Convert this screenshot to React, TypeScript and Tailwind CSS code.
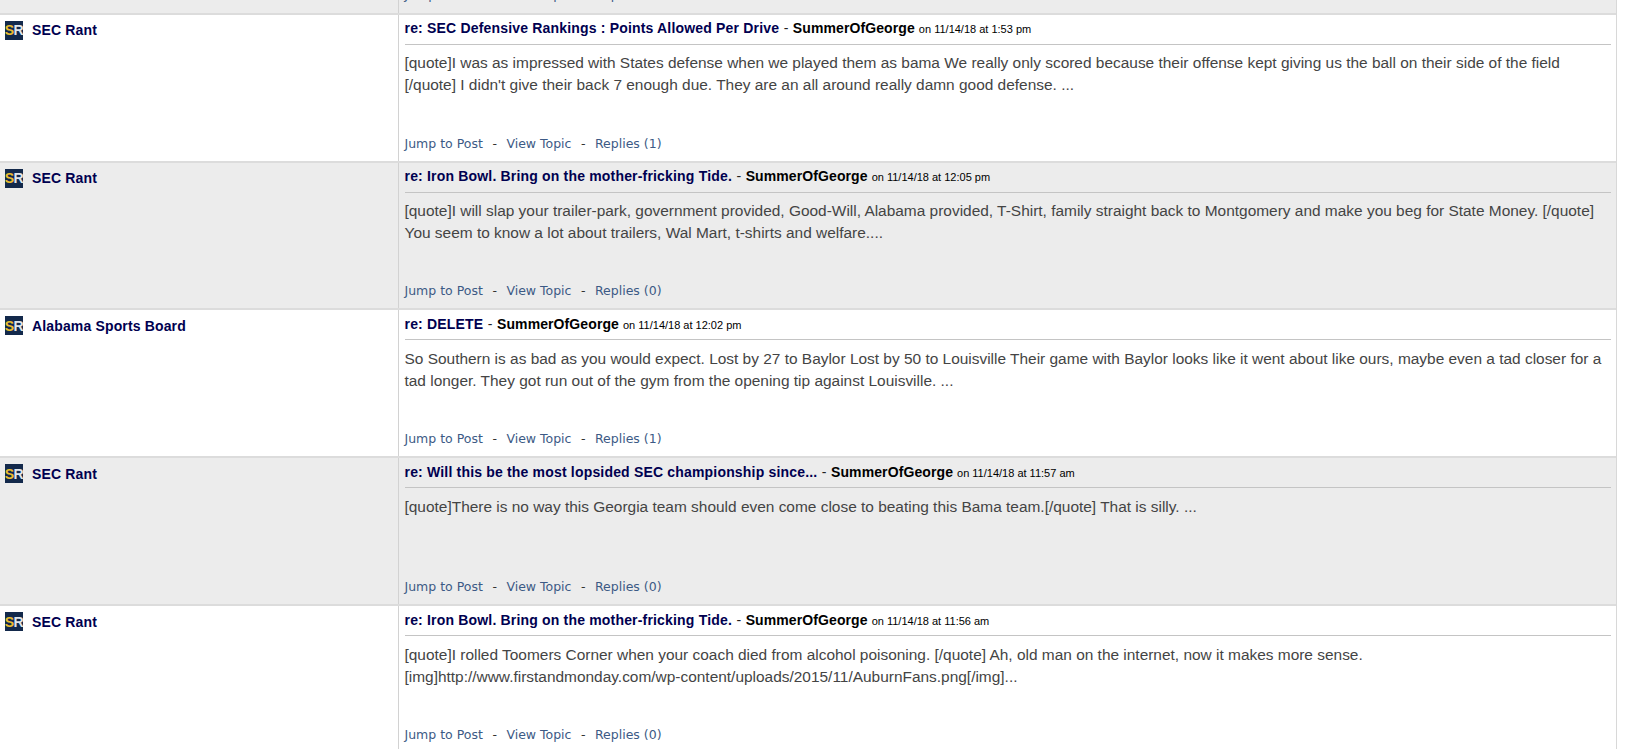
const arial = "font-['Liberation_Sans',Arial,sans-serif]";

type Post = {
  board: string;
  title: string;
  date: string;
  body: string[];
  replies: number;
};

const posts: Post[] = [
  {
    board: "SEC Rant",
    title: "re: SEC Defensive Rankings : Points Allowed Per Drive",
    date: "on 11/14/18 at 1:53 pm",
    body: [
      "[quote]I was as impressed with States defense when we played them as bama We really only scored because their offense kept giving us the ball on their side of the field",
      "[/quote] I didn't give their back 7 enough due. They are an all around really damn good defense. ...",
    ],
    replies: 1,
  },
  {
    board: "SEC Rant",
    title: "re: Iron Bowl. Bring on the mother-fricking Tide.",
    date: "on 11/14/18 at 12:05 pm",
    body: [
      "[quote]I will slap your trailer-park, government provided, Good-Will, Alabama provided, T-Shirt, family straight back to Montgomery and make you beg for State Money. [/quote]",
      "You seem to know a lot about trailers, Wal Mart, t-shirts and welfare....",
    ],
    replies: 0,
  },
  {
    board: "Alabama Sports Board",
    title: "re: DELETE",
    date: "on 11/14/18 at 12:02 pm",
    body: [
      "So Southern is as bad as you would expect. Lost by 27 to Baylor Lost by 50 to Louisville Their game with Baylor looks like it went about like ours, maybe even a tad closer for a",
      "tad longer. They got run out of the gym from the opening tip against Louisville. ...",
    ],
    replies: 1,
  },
  {
    board: "SEC Rant",
    title: "re: Will this be the most lopsided SEC championship since...",
    date: "on 11/14/18 at 11:57 am",
    body: ["[quote]There is no way this Georgia team should even come close to beating this Bama team.[/quote] That is silly. ..."],
    replies: 0,
  },
  {
    board: "SEC Rant",
    title: "re: Iron Bowl. Bring on the mother-fricking Tide.",
    date: "on 11/14/18 at 11:56 am",
    body: [
      "[quote]I rolled Toomers Corner when your coach died from alcohol poisoning. [/quote] Ah, old man on the internet, now it makes more sense.",
      "[img]http://www.firstandmonday.com/wp-content/uploads/2015/11/AuburnFans.png[/img]...",
    ],
    replies: 0,
  },
];

function Logo() {
  return (
    <span className={`flex h-[19px] w-[18px] shrink-0 items-center justify-center overflow-hidden bg-[#13294b] text-[14px] leading-none font-bold tracking-[-0.5px] ${arial}`}>
      <span className="text-[#e9bd2f]">S</span>
      <span className="text-[#dfe5ec]">R</span>
    </span>
  );
}

function Links({ replies }: { replies: number }) {
  return (
    <div className="flex h-[16px] items-center font-['DejaVu_Sans',Verdana,sans-serif] text-[12.5px] leading-none text-[#3c5a85]">
      <span>Jump to Post</span>
      <span className="mx-[9.5px] text-[#333]">-</span>
      <span>View Topic</span>
      <span className="mx-[9.5px] text-[#333]">-</span>
      <span>Replies ({replies})</span>
    </div>
  );
}

function Row({ post, shaded }: { post: Post; shaded: boolean }) {
  return (
    <div className={`flex h-[147.85px] border-b-2 border-[#dcdcdc] ${shaded ? "bg-[#ececec]" : "bg-white"}`}>
      <div className="flex w-[398px] shrink-0 gap-[9px] pt-[6px] pl-[5px]">
        <Logo />
        <a className={`pt-[1.5px] text-[14px] leading-[16px] font-bold tracking-[0.15px] text-[#000050] ${arial}`}>{post.board}</a>
      </div>
      <div className="flex min-w-0 flex-1 flex-col border-l border-[#d2d2d2] pr-[5.5px] pl-[5.5px]">
        <div className={`flex h-[30px] items-baseline border-b border-[#c4c4c4] pt-[5.5px] text-[14px] leading-[16px] ${arial}`}>
          <a className="font-bold tracking-[0.18px] text-[#000050]">{post.title}</a>
          <span className="mx-[4.5px] text-[#222]">-</span>
          <a className="font-bold tracking-[0.1px] text-black">SummerOfGeorge</a>
          <span className="ml-[4px] text-[11px] text-black">{post.date}</span>
        </div>
        <div className={`h-[91.15px] pt-[7.5px] text-[15.45px] leading-[22px] text-[#444] ${arial}`}>
          {post.body.map((line) => (
            <p key={line} className="whitespace-nowrap">{line}</p>
          ))}
        </div>
        <Links replies={post.replies} />
      </div>
    </div>
  );
}

export default function App() {
  return (
    <div className="h-[749px] w-[1644px] overflow-hidden bg-white">
      <div className="w-[1617px] border-r border-[#d8d8d8]">
        <div className="-mt-[133.1px] flex h-[147.85px] border-b-2 border-[#dcdcdc] bg-[#ececec]">
          <div className="w-[398px] shrink-0" />
          <div className="flex flex-1 flex-col justify-end border-l border-[#d2d2d2] pb-[10px] pl-[5.5px]">
            <Links replies={1} />
          </div>
        </div>
        {posts.map((post, i) => (
          <Row key={i} post={post} shaded={i % 2 === 1} />
        ))}
      </div>
    </div>
  );
}
